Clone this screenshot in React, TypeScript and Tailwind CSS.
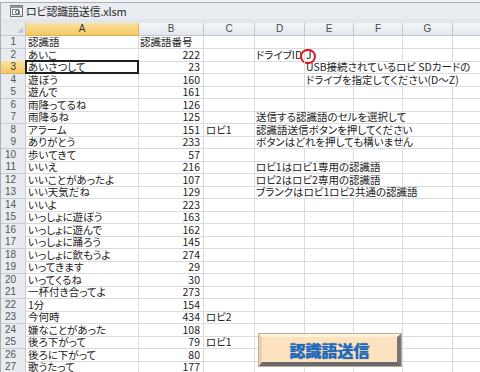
type Extra = { text?: string; span: number; circle?: boolean };

type Row = {
  a?: string;
  b?: string;
  bLeft?: boolean;
  c?: string;
  extra?: Extra[];
};

const empty = (): Extra[] => [
  { span: 1 },
  { span: 1 },
  { span: 1 },
  { span: 1 },
  { span: 1 },
];

const spanClass: Record<number, string> = {
  1: 'col-span-1',
  2: 'col-span-2',
  3: 'col-span-3',
  4: 'col-span-4',
  5: 'col-span-5',
};

const rows: Row[] = [
  { a: '認識語', b: '認識語番号', bLeft: true },
  {
    a: 'あいこ',
    b: '222',
    extra: [{ text: 'ドライブID', span: 1 }, { text: 'J', span: 1, circle: true }, { span: 1 }, { span: 1 }, { span: 1 }],
  },
  { a: 'あいさつして', b: '23', extra: [{ span: 1 }, { text: 'USB接続されているロビ SDカードの', span: 4 }] },
  { a: '遊ぼう', b: '160', extra: [{ span: 1 }, { text: 'ドライブを指定してください(D〜Z)', span: 4 }] },
  { a: '遊んで', b: '161' },
  { a: '雨降ってるね', b: '126' },
  { a: '雨降るね', b: '125', extra: [{ text: '送信する認識語のセルを選択して', span: 3 }, { span: 1 }, { span: 1 }] },
  { a: 'アラーム', b: '151', c: 'ロビ1', extra: [{ text: '認識語送信ボタンを押してください', span: 3 }, { span: 1 }, { span: 1 }] },
  { a: 'ありがとう', b: '233', extra: [{ text: 'ボタンはどれを押しても構いません', span: 3 }, { span: 1 }, { span: 1 }] },
  { a: '歩いてきて', b: '57' },
  { a: 'いいえ', b: '216', extra: [{ text: 'ロビ1はロビ1専用の認識語', span: 3 }, { span: 1 }, { span: 1 }] },
  { a: 'いいことがあったよ', b: '107', extra: [{ text: 'ロビ2はロビ2専用の認識語', span: 3 }, { span: 1 }, { span: 1 }] },
  { a: 'いい天気だね', b: '129', extra: [{ text: 'ブランクはロビ1ロビ2共通の認識語', span: 4 }, { span: 1 }] },
  { a: 'いいよ', b: '223' },
  { a: 'いっしょに遊ぼう', b: '163' },
  { a: 'いっしょに遊んで', b: '162' },
  { a: 'いっしょに踊ろう', b: '145' },
  { a: 'いっしょに飲もうよ', b: '274' },
  { a: 'いってきます', b: '29' },
  { a: 'いってくるね', b: '30' },
  { a: '一杯付き合ってよ', b: '273' },
  { a: '1分', b: '154' },
  { a: '今何時', b: '434', c: 'ロビ2' },
  { a: '嫌なことがあった', b: '108' },
  { a: '後ろ下がって', b: '79', c: 'ロビ1' },
  { a: '後ろに下がって', b: '80' },
  { a: '歌うたって', b: '177' },
];

const cols = ['A', 'B', 'C', 'D', 'E', 'F', 'G', 'H'];
const gridCols = 'grid grid-cols-[25px_113px_65px_51px_50px_49px_49px_50px_60px]';
const cell = 'border-r border-b border-[#d8dce2] h-full overflow-visible whitespace-nowrap';

function SheetIcon() {
  return (
    <svg width="13" height="12" viewBox="0 0 13 12">
      <rect x="0.5" y="0.5" width="12" height="11" fill="#f4f5f7" stroke="#6b7280" />
      <rect x="0.5" y="0.5" width="12" height="2.5" fill="#8d949e" />
      <rect x="2.5" y="4.5" width="6" height="5" fill="#fff" stroke="#7a818b" />
      <circle cx="7.5" cy="7" r="2" fill="none" stroke="#4b5563" />
      <line x1="9" y1="8.5" x2="11" y2="10.5" stroke="#4b5563" />
    </svg>
  );
}

export default function App() {
  return (
    <div className="relative w-[480px] h-[372px] overflow-hidden bg-white font-['Noto_Sans_CJK_JP',sans-serif] [font-feature-settings:'palt']">
      {/* Title bar */}
      <div className="h-[23px] bg-[#f3f4f6] pt-[2px]">
        <div className="h-[21px] border-t border-l border-[#a9b0ba] bg-[#e9ecf0] flex flex-col">
          <div className="h-[16px] flex items-center gap-[3px] pl-[9px]">
            <SheetIcon />
            <span className="text-[11px] leading-[12px] text-[#2b2b2b] tracking-[-0.2px]">ロビ認識語送信.xlsm</span>
          </div>
          <div className="flex-1 bg-[#e2e6eb]" />
        </div>
      </div>

      <div className="flex">
        {/* window frame */}
        <div className="w-[6px] h-[349px] border-l border-[#a9b0ba] bg-[#e2e6eb]" />

        <div className="flex-1">
          {/* column headers */}
          <div className={`${gridCols} h-[13px]`}>
            <div className="relative border-r border-b border-[#c2c8d0] bg-[#e6e9ee]">
              <div className="absolute right-[2px] bottom-[2px] w-0 h-0 border-l-[6px] border-l-transparent border-b-[6px] border-b-[#c3c8ce]" />
            </div>
            {cols.map((c) => (
              <div
                key={c}
                className={`flex items-center justify-center text-[10px] leading-[12px] font-['Liberation_Sans',sans-serif] border-r border-b ${
                  c === 'A'
                    ? 'bg-gradient-to-b from-[#fbe2a0] to-[#f5c75f] border-[#dcb25a] text-[#3a3a3a]'
                    : 'bg-gradient-to-b from-[#f5f6f8] to-[#e3e7ec] border-[#c2c8d0] text-[#4a4a4a]'
                }`}
              >
                {c === 'H' ? '' : c}
              </div>
            ))}
          </div>

          {/* rows */}
          {rows.map((r, i) => {
            const n = i + 1;
            const extra = r.extra ?? empty();
            return (
              <div key={n} className={`${gridCols} h-[12.5px] text-[10.5px] leading-[12px] text-[#222]`}>
                <div
                  className={`flex items-center justify-end pr-[9px] text-[10px] font-['Liberation_Sans',sans-serif] border-r border-b ${
                    n === 3
                      ? 'bg-gradient-to-b from-[#fbe2a0] to-[#f5c75f] border-[#dcb25a] text-[#3a3a3a]'
                      : 'bg-[#e8ebef] border-[#c6ccd3] text-[#555]'
                  }`}
                >
                  {n}
                </div>
                <div className={`${cell} relative pl-[2px]`}>
                  {r.a}
                  {n === 3 && <div className="absolute -left-px -top-px right-[-1px] bottom-[-1px] border-2 border-[#1e1e1e]" />}
                </div>
                <div className={`${cell} ${r.bLeft ? 'pl-[1px]' : 'text-right pr-[3px]'}`}>{r.b}</div>
                <div className={`${cell} pl-[2px]`}>{r.c}</div>
                {extra.map((e, j) => (
                  <div key={j} className={`${cell} ${spanClass[e.span]} relative pl-[1px]`}>
                    {e.text}
                    {e.circle && (
                      <div className="absolute left-[-5px] top-[0px] w-[16px] h-[15px] rounded-full border-[2.5px] border-[#e8141b]" />
                    )}
                  </div>
                ))}
              </div>
            );
          })}
        </div>
      </div>

      {/* Send button */}
      <button className="absolute left-[259px] top-[334px] w-[142px] h-[32px] border-t-[3px] border-l-[3px] border-r-[4px] border-b-[4px] border-t-[#fff1dc] border-l-[#efd1a8] border-r-[#767676] border-b-[#6a6a6a] bg-[#fde2c0] outline outline-1 outline-[#b9ada0] flex items-center justify-center">
        <span className="text-[16px] font-bold leading-none text-[#1c6cc4] [font-feature-settings:normal] [text-shadow:0_0_1px_#0b3f80]">
          認識語送信
        </span>
      </button>
    </div>
  );
}
